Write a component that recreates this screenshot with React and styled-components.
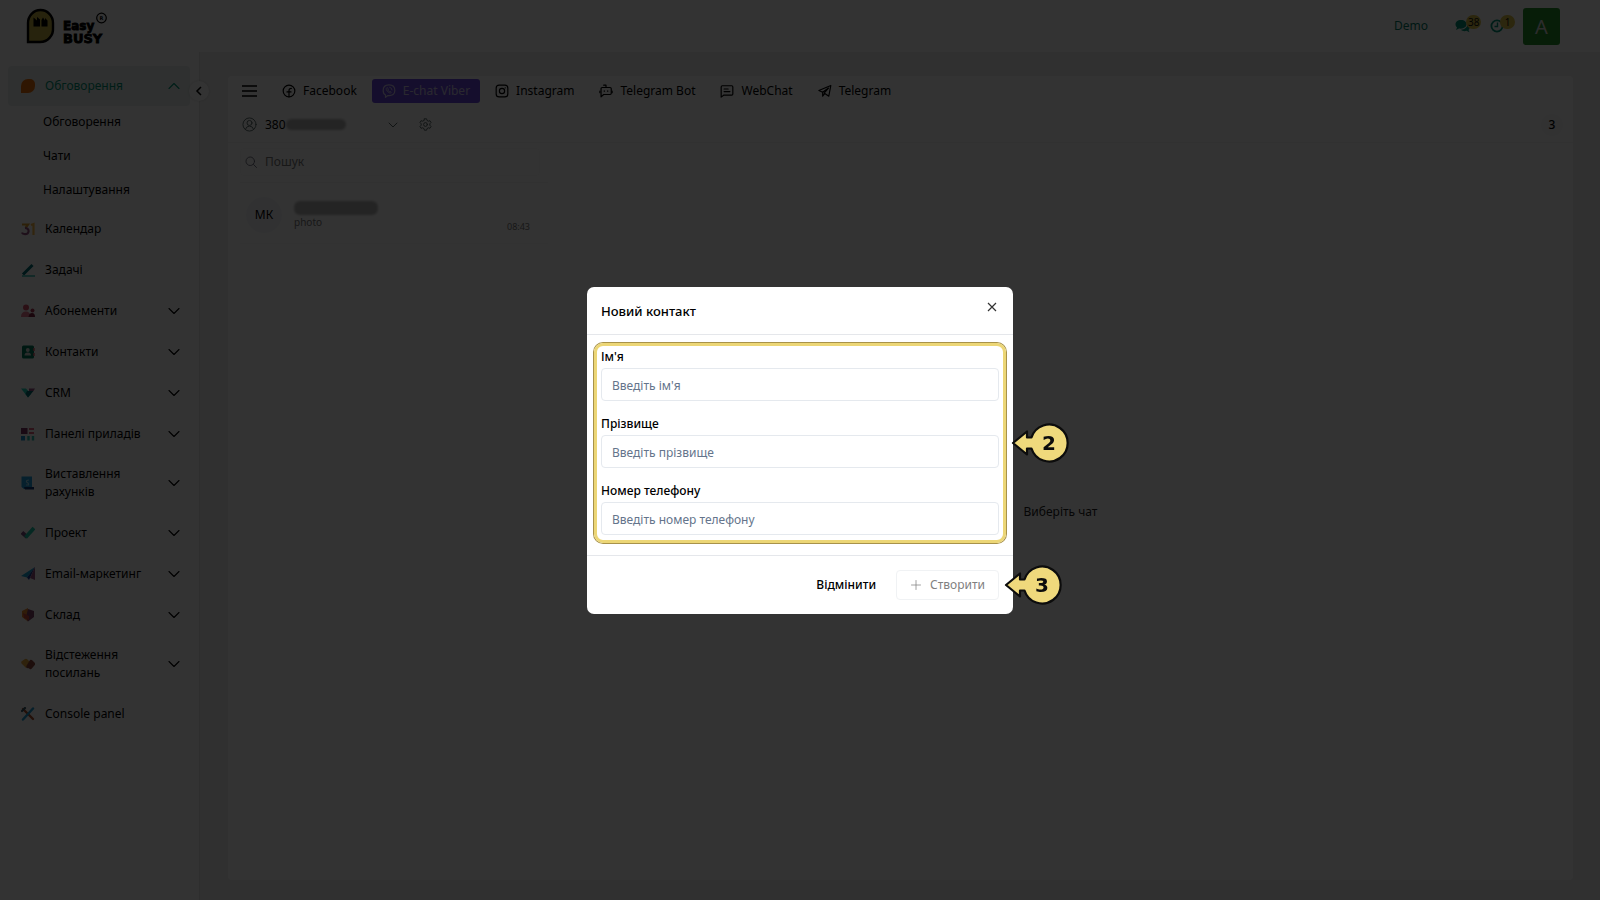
import React from "react";
import styled, { createGlobalStyle, css } from "styled-components";

const GlobalStyle = createGlobalStyle`
  *, *::before, *::after { box-sizing: border-box; }
  body {
    margin: 0;
    background: #f0f0f0;
    color: #000;
    font-family: "Noto Sans", "Open Sans", sans-serif;
    font-size: 12px;
    line-height: 18px;
  }
  button, input, select { font: inherit; color: inherit; }
  button { border: 0; background: none; padding: 0; cursor: pointer; }
  a { color: inherit; text-decoration: none; }
`;

const Page = styled.div`
  display: flex;
  flex-direction: column;
  min-height: 100vh;
`;

/* ---------- header ---------- */

const Header = styled.header`
  display: flex;
  align-items: center;
  justify-content: space-between;
  height: 52px;
  padding: 0 40px 0 26px;
  background: #fff;
`;

const HeaderTools = styled.div`
  display: flex;
  align-items: center;
`;

const Company = styled.a`
  margin-right: 27px;
  color: #007a64;
`;

const ToolButton = styled.button`
  position: relative;
  display: flex;
  width: 16px;
  height: 16px;
  margin-right: 18px;
  color: #009377;
  &:last-of-type { margin-right: 16px; }
`;

const ToolBadge = styled.span`
  position: absolute;
  left: 11px;
  top: -3px;
  min-width: 15px;
  padding: 0 2px;
  border-radius: 8px;
  background: #dcc146;
  color: #111;
  font-size: 10px;
  line-height: 14px;
  text-align: center;
`;

const UserAvatar = styled.button`
  width: 37px;
  height: 37px;
  border-radius: 3px;
  background: #26902a;
  color: #ddd;
  font-size: 20px;
  line-height: 37px;
`;

/* ---------- sidebar ---------- */

const Columns = styled.div`
  display: flex;
  flex: 1;
`;

const Sidebar = styled.nav`
  position: relative;
  flex: 0 0 200px;
  padding: 14px 9px 14px 8px;
  border-right: 1px solid #e6e6e6;
  background: #fff;
`;

const CollapseButton = styled.button`
  position: absolute;
  right: -10px;
  top: 29px;
  display: grid;
  place-items: center;
  width: 20px;
  height: 20px;
  border-radius: 50%;
  background: #fff;
  box-shadow: 0 0 3px rgba(0, 0, 0, 0.15);
`;

const MenuItem = styled.a`
  display: flex;
  align-items: center;
  gap: 10px;
  min-height: 40px;
  margin-bottom: 1px;
  padding: 10px 10px 11px 13px;
  border-radius: 4px;
  ${(p) =>
    p.$active &&
    css`
      background: #e9f1ef;
      color: #009375;
    `}
`;

const MenuLabel = styled.span`
  flex: 1;
`;

const SubMenu = styled.div`
  display: flex;
  flex-direction: column;
  margin-top: -2px;
  padding-bottom: 2px;
`;

const SubItem = styled.a`
  padding: 8px 8px 8px 35px;
`;

/* ---------- chat panel ---------- */

const Main = styled.main`
  display: flex;
  flex: 1;
  min-width: 0;
  padding: 24px 27px 20px 28px;
`;

const Panel = styled.section`
  display: flex;
  flex: 1;
  flex-direction: column;
  border-radius: 4px;
  background: #fff;
`;

const ChannelBar = styled.div`
  display: flex;
  align-items: center;
  gap: 5px;
  padding: 3px 14px 0;
`;

const BurgerButton = styled.button`
  display: flex;
  width: 25px;
`;

const Channel = styled.button`
  display: flex;
  align-items: center;
  gap: 7px;
  height: 24px;
  padding: 0 10px;
  border-radius: 3px;
  white-space: nowrap;
  ${(p) =>
    p.$active &&
    css`
      background: #6a48e0;
      color: #d0c8ec;
    `}
`;

const AccountBar = styled.div`
  display: flex;
  align-items: center;
  gap: 8px;
  height: 40px;
  padding: 4px 10px 0 14px;
  border-bottom: 1px solid #f2f2f2;
`;

const AccountButton = styled.button`
  display: flex;
  align-items: center;
  width: 157px;
  gap: 8px;
`;

const Account = styled.span`
  display: flex;
  flex: 1;
  align-items: center;
`;

const Smudge = styled.span`
  width: ${(p) => p.$width}px;
  height: ${(p) => p.$height}px;
  border-radius: 6px;
  background: #b4b4b4;
  filter: blur(1px);
`;

const IconButton = styled.button`
  display: flex;
  margin-left: 12px;
  color: #566;
`;

const CountBadge = styled.span`
  width: 22px;
  height: 22px;
  margin-left: auto;
  border-radius: 50%;
  background: #f7f7fb;
  font-weight: 500;
  line-height: 22px;
  text-align: center;
`;

const Workspace = styled.div`
  display: flex;
  flex: 1;
`;

const ChatList = styled.div`
  flex: 0 0 320px;
  padding: 5px 0 0 12px;
`;

const SearchBox = styled.label`
  display: flex;
  align-items: center;
  gap: 8px;
  height: 28px;
  margin: 0 8px 6px 0;
  padding: 0 4px;
  border: 1px solid #fafafa;
  border-radius: 4px;
  color: #667;
`;

const SearchInput = styled.input`
  flex: 1;
  min-width: 0;
  padding: 0;
  border: 0;
  outline: 0;
  background: none;
  &::placeholder { color: #777; opacity: 1; }
`;

const ChatRow = styled.button`
  display: flex;
  align-items: center;
  width: 100%;
  height: 62px;
  gap: 12px;
  padding: 4px 18px 0 6px;
  border-top: 1px solid #f2f2f2;
  border-bottom: 1px solid #f8f8f8;
  text-align: left;
`;

const ChatAvatar = styled.span`
  width: 36px;
  height: 36px;
  border-radius: 50%;
  background: #f5f6fb;
  line-height: 36px;
  text-align: center;
`;

const ChatText = styled.span`
  display: flex;
  flex: 1;
  flex-direction: column;
  color: #777;
  font-size: 10px;
  line-height: 14px;
`;

const ChatTime = styled.time`
  align-self: flex-end;
  padding-bottom: 7px;
  color: #777;
  font-size: 9px;
`;

const EmptyChat = styled.div`
  display: grid;
  flex: 1;
  place-items: center;
  color: #222;
`;

/* ---------- dialog ---------- */

const Backdrop = styled.div`
  position: fixed;
  inset: 0;
  display: flex;
  align-items: center;
  justify-content: center;
  background: rgba(0, 0, 0, 0.8);
`;

const Dialog = styled.form`
  width: 426px;
  border-radius: 7px;
  background: #fff;
`;

const DialogHeader = styled.div`
  display: flex;
  align-items: flex-start;
  justify-content: space-between;
  height: 48px;
  padding: 14px 14px 0;
  border-bottom: 1px solid #e5e7eb;
`;

const DialogTitle = styled.h2`
  margin: 0;
  font-size: 13px;
  font-weight: 500;
  line-height: 20px;
`;

const CloseButton = styled.button`
  display: flex;
  color: #333;
`;

const Fields = styled.div`
  position: relative;
  display: flex;
  flex-direction: column;
  gap: 13px;
  margin: 8px 7px 12px;
  padding: 1px 4px 5px;
  border: 3px solid #ecd676;
  border-radius: 9px;
  box-shadow: 0 0 0 1px #a8924a;
`;

const Field = styled.label`
  display: flex;
  flex-direction: column;
  gap: 1px;
  font-weight: 500;
  line-height: 20px;
`;

const TextInput = styled.input`
  width: 100%;
  height: 33px;
  padding: 2px 10px 0;
  border: 1px solid #e5e9ee;
  border-radius: 4px;
  outline: 0;
  background: #fff;
  font-weight: 400;
  &::placeholder { color: #64748b; opacity: 1; }
`;

const DialogFooter = styled.div`
  display: flex;
  align-items: center;
  justify-content: flex-end;
  gap: 20px;
  height: 59px;
  padding: 0 14px;
  border-top: 1px solid #e5e7eb;
`;

const CancelButton = styled.button`
  font-weight: 500;
`;

const CreateWrap = styled.div`
  position: relative;
`;

const CreateButton = styled.button`
  display: flex;
  align-items: center;
  gap: 8px;
  height: 30px;
  padding: 0 13px;
  border: 1px solid #f0f2f4;
  border-radius: 4px;
  color: #808080;
`;

const CalloutBox = styled.span`
  position: absolute;
  left: calc(100% + ${(p) => p.$gap}px);
  top: 50%;
  display: flex;
  transform: translateY(-50%);
`;

/* ---------- drawings ---------- */

function Callout({ number, gap }) {
  return (
    <CalloutBox $gap={gap}>
      <svg width="60" height="42" viewBox="0 0 60 42">
        <path
          d="M3 21 L17 9.500 V15.500 H21.500 A18.500 18.500 0 1 1 21.500 26.500 H17 V32.500 Z"
          fill="#efd97c"
          stroke="#0c0c0c"
          strokeWidth="2.200"
          strokeLinejoin="round"
        />
        <text x="39" y="28" textAnchor="middle" fontFamily="DejaVu Sans" fontWeight="700" fontSize="20" fill="#0c0c0c">
          {number}
        </text>
      </svg>
    </CalloutBox>
  );
}

function Logo() {
  return (
    <svg width="84" height="44" viewBox="0 -4 84 44" role="img" aria-label="Easy Busy">
      <path d="M2 34 V15 A12.500 13 0 0 1 27 15 V20 A13 13 0 0 1 14 34 Z" fill="#c2ae40" stroke="#000" strokeWidth="2.400" />
      <path d="M7.500 9.500 l3.500 3 v-3.500 l3 2.500 v7 h-6.500 z M15.500 12 l1.500 -2.500 2 3 v-2.500 l2.500 2.500 v6 h-6 z" fill="#000" />
      <g fontFamily="DejaVu Sans" fontWeight="700" fill="#000" stroke="#000" strokeWidth="0.800">
        <text x="37" y="22" fontSize="12">Easy</text>
        <text x="37" y="35" fontSize="13">BUSY</text>
      </g>
      <circle cx="75.500" cy="10" r="4.800" fill="none" stroke="#000" strokeWidth="1.200" />
      <text x="75.500" y="12" fontFamily="DejaVu Sans" fontWeight="700" fontSize="5" textAnchor="middle">R</text>
    </svg>
  );
}

const Line = ({ size = 14, width = 2, children, ...rest }) => (
  <svg width={size} height={size} viewBox="0 0 24 24" fill="none" stroke="currentColor" strokeWidth={width} strokeLinecap="round" strokeLinejoin="round" aria-hidden="true" {...rest}>
    {children}
  </svg>
);

const Chevron = ({ up }) => (
  <svg width="12" height="12" viewBox="0 0 12 12" fill="none" stroke="currentColor" strokeWidth="1.100" strokeLinecap="round" strokeLinejoin="round" aria-hidden="true">
    <path d={up ? "M1 8.500 L6 3.500 L11 8.500" : "M1 3.500 L6 8.500 L11 3.500"} />
  </svg>
);

const channelIcons = {
  facebook: (
    <Line>
      <circle cx="12" cy="12" r="10" />
      <path d="M12 22 V11 Q12 7.500 16 7.500 M8.500 13.500 H15.500" />
    </Line>
  ),
  viber: (
    <Line>
      <path d="M12 1.500 C5 1.500 2 4.500 2 11 C2 15 3.200 17.500 6 18.800 V23 L10 19.800 C18 20.500 22 17.500 22 11 C22 4.500 19 1.500 12 1.500 Z" />
      <path d="M8 6.500 C6 8 7.500 11 9.500 13 C11.500 15 14.500 16.500 16 14.500 L13.800 12.500 L12.500 13.200 C11 12.500 10.300 11.500 10 10.300 L10.800 9 Z M13 5.500 Q17 6 17.200 10.200" strokeWidth="1.600" />
    </Line>
  ),
  instagram: (
    <Line>
      <rect x="2" y="2" width="20" height="20" rx="5" />
      <circle cx="12" cy="12" r="4.500" />
      <path d="M17.500 6.500 h.01" />
    </Line>
  ),
  bot: (
    <Line>
      <path d="M12 6 V2 H8 M1.500 12 v3 M22.500 12 v3 M9 11.500 v1 M15 11.500 v1" />
      <path d="M21 16 a2 2 0 0 1 -2 2 H8 L3.500 22 V8 a2 2 0 0 1 2 -2 h13.500 a2 2 0 0 1 2 2 Z" />
    </Line>
  ),
  web: (
    <Line>
      <path d="M22 17 a2 2 0 0 1 -2 2 H6.800 L2 22.500 V5 a2 2 0 0 1 2 -2 h16 a2 2 0 0 1 2 2 Z M7 8.500 h7 M7 13 h10" />
    </Line>
  ),
  telegram: (
    <Line>
      <path d="M22 2.500 L1.500 11 L8 14 L18 7 L10.500 15.500 L18.500 21 Z M8 14 V21 L11.500 16.500" />
    </Line>
  ),
};

const menuIcons = {
  discuss: <path d="M0 14 V7 A7 7 0 0 1 7 0 H9 A5 5 0 0 1 14 5 V7 A7 7 0 0 1 7 14 Z" fill="#e8700a" />,
  calendar: (
    <g fill="none" strokeWidth="2.200">
      <path d="M1 2.500 H7 L4.500 6" stroke="#e0a030" />
      <path d="M4 6 C9 6 8.500 12.500 4 12.200 Q1.500 12 1 10.500" stroke="#985184" />
      <path d="M10 3 L12.500 2 V13" stroke="#fbb945" />
    </g>
  ),
  tasks: (
    <g fill="none">
      <path d="M2 11.500 L11.500 2" stroke="#016e76" strokeWidth="3" />
      <path d="M1 13 H14" stroke="#2ebcae" strokeWidth="1.500" />
    </g>
  ),
  subs: (
    <g>
      <circle cx="5" cy="3.500" r="3" fill="#d8506c" />
      <path d="M0 13 Q0 7.500 5 7.500 Q9 7.500 10 13 Z" fill="#e87890" />
      <circle cx="11.500" cy="6.500" r="2" fill="#b03a56" />
      <path d="M7.500 13 Q8 9 11 9 Q14 9 14 13 Z" fill="#7c1f3c" />
    </g>
  ),
  contacts: (
    <g>
      <rect x="1" y="0.500" width="12" height="13" rx="1.500" fill="#017a5c" />
      <path d="M13 3 v3 M13 8 v3" stroke="#e0606c" strokeWidth="1.500" />
      <circle cx="6.800" cy="5" r="1.900" fill="#ddd" />
      <path d="M3.500 10.500 Q3.500 7.500 6.800 7.500 Q10 7.500 10 10.500 Z" fill="#ddd" />
    </g>
  ),
  crm: (
    <g>
      <path d="M0 2.500 H5 L10 8 L7 11.500 Z" fill="#1ad3bb" />
      <path d="M12.500 5 H6 L4.500 8 L7 11.500 Z" fill="#046b72" />
      <path d="M8 2.500 H14 L12.500 5 H8 Z" fill="#985184" />
    </g>
  ),
  boards: (
    <g>
      <rect x="0" y="1" width="6.500" height="6" fill="#7c3265" />
      <path d="M8 2 h5 M8 6 h5" stroke="#e0607c" strokeWidth="2" />
      <rect x="0" y="9" width="4" height="4.500" fill="#1a8fd0" />
      <path d="M7.500 9 v4.500 M12 9 v4.500" stroke="#2ebcae" strokeWidth="2.400" />
    </g>
  ),
  invoice: (
    <g>
      <path d="M0.500 0.500 H11 V13 H3 L0.500 11 Z" fill="#1ea0e0" />
      <path d="M3 11 H13 V13.500 H4 Z" fill="#123a78" />
      <path d="M8 4 Q5 4 5.500 6 Q8 7 7.500 9 H5" fill="none" stroke="#a0def8" strokeWidth="1.200" />
    </g>
  ),
  project: (
    <g fill="none" strokeWidth="3.800">
      <path d="M1 6.500 L6 11" stroke="#7a4a80" />
      <path d="M4.500 11.500 L13 2" stroke="#1ac8a8" />
    </g>
  ),
  email: (
    <g>
      <path d="M14 0 L0 9 L6 10.500 Z" fill="#1aa6d8" />
      <path d="M14 0 L6 10.500 L8 13 Z" fill="#1b3f9b" />
      <path d="M14 0 L9 11 L14 13 Z" fill="#985184" />
    </g>
  ),
  stock: (
    <g>
      <path d="M7 0 L1 3 V9 L7 13.500 Z" fill="#f08a30" />
      <path d="M7 1 L13 3 V9 L7 13.500 L5 9 Z" fill="#80406c" />
      <path d="M2 5 L8 8 V12 L3 10 Z" fill="#d04a3c" />
    </g>
  ),
  links: (
    <g fill="none" strokeWidth="3.400" strokeLinejoin="round" strokeLinecap="round">
      <path d="M2 5.500 L5.500 9 L8 6.500 L5 3.500 Z" stroke="#e8a83c" />
      <path d="M7 9.500 L10 4.500 L12.500 7 L9.500 10.500" stroke="#90483c" />
    </g>
  ),
  consolePanel: (
    <g fill="none" strokeLinecap="round">
      <path d="M2 2 L12 12" stroke="#b0502c" strokeWidth="2.400" />
      <path d="M2 12.500 L12 1.500" stroke="#1e9ad0" strokeWidth="2.400" />
      <path d="M1 4 L4 1" stroke="#335566" strokeWidth="2.200" />
    </g>
  ),
};

const MenuIcon = ({ name }) => (
  <svg width="14" height="14" viewBox="0 0 14 14" aria-hidden="true">
    {menuIcons[name]}
  </svg>
);

/* ---------- data ---------- */

const menu = [
  { icon: "calendar", label: "Календар" },
  { icon: "tasks", label: "Задачі" },
  { icon: "subs", label: "Абонементи", nested: true },
  { icon: "contacts", label: "Контакти", nested: true },
  { icon: "crm", label: "CRM", nested: true },
  { icon: "boards", label: "Панелі приладів", nested: true },
  { icon: "invoice", label: "Виставлення рахунків", nested: true },
  { icon: "project", label: "Проект", nested: true },
  { icon: "email", label: "Email-маркетинг", nested: true },
  { icon: "stock", label: "Склад", nested: true },
  { icon: "links", label: "Відстеження посилань", nested: true },
  { icon: "consolePanel", label: "Console panel" },
];

const channels = [
  { icon: "facebook", label: "Facebook" },
  { icon: "viber", label: "E-chat Viber", active: true },
  { icon: "instagram", label: "Instagram" },
  { icon: "bot", label: "Telegram Bot" },
  { icon: "web", label: "WebChat" },
  { icon: "telegram", label: "Telegram" },
];

const fields = [
  { name: "first", label: "Ім'я", hint: "Введіть ім'я" },
  { name: "last", label: "Прізвище", hint: "Введіть прізвище" },
  { name: "phone", label: "Номер телефону", hint: "Введіть номер телефону" },
];

export default function App() {
  return (
    <>
      <GlobalStyle />
      <Page>
        <Header>
          <Logo />
          <HeaderTools>
            <Company href="#">Demo</Company>
            <ToolButton type="button" aria-label="Повідомлення">
              <svg width="16" height="16" viewBox="0 0 16 16" fill="currentColor">
                <path d="M6 2 C2.500 2 0.500 4 0.500 6.300 C0.500 7.500 1 8.600 2 9.400 L1 12 L4 10.500 C8.500 11.300 11.500 9 11.500 6.300 C11.500 4 9.500 2 6 2 Z M12.500 6 C12.500 9.500 9.500 11.600 6 11.700 C7.500 13.200 9.500 13.500 11.500 12.800 L14.500 14.300 L13.500 12 C15.500 10.300 15 7 12.500 6 Z" />
              </svg>
              <ToolBadge>38</ToolBadge>
            </ToolButton>
            <ToolButton type="button" aria-label="Активності">
              <svg width="16" height="16" viewBox="0 0 16 16" fill="none" stroke="currentColor" strokeWidth="1.800">
                <circle cx="8" cy="8" r="5.600" />
                <path d="M8.500 4.500 V8.500 H5.500" strokeWidth="1.400" />
              </svg>
              <ToolBadge>1</ToolBadge>
            </ToolButton>
            <UserAvatar type="button">A</UserAvatar>
          </HeaderTools>
        </Header>
        <Columns>
          <Sidebar>
            <MenuItem href="#" $active>
              <MenuIcon name="discuss" />
              <MenuLabel>Обговорення</MenuLabel>
              <Chevron up />
            </MenuItem>
            <SubMenu>
              <SubItem href="#">Обговорення</SubItem>
              <SubItem href="#">Чати</SubItem>
              <SubItem href="#">Налаштування</SubItem>
            </SubMenu>
            {menu.map((m) => (
              <MenuItem href="#" key={m.label}>
                <MenuIcon name={m.icon} />
                <MenuLabel>{m.label}</MenuLabel>
                {m.nested && <Chevron />}
              </MenuItem>
            ))}
            <CollapseButton type="button" aria-label="Згорнути меню">
              <svg width="8" height="10" viewBox="0 0 8 10" fill="none" stroke="currentColor" strokeWidth="1.500">
                <path d="M6 1 L2 5 L6 9" />
              </svg>
            </CollapseButton>
          </Sidebar>
          <Main>
            <Panel>
              <ChannelBar>
                <BurgerButton type="button" aria-label="Меню">
                  <svg width="16" height="14" viewBox="0 0 16 14" stroke="currentColor" strokeWidth="1.500">
                    <path d="M0 2 H15 M0 7 H15 M0 12 H15" />
                  </svg>
                </BurgerButton>
                {channels.map((c) => (
                  <Channel type="button" key={c.label} $active={c.active}>
                    {channelIcons[c.icon]}
                    {c.label}
                  </Channel>
                ))}
              </ChannelBar>
              <AccountBar>
                <AccountButton type="button">
                  <Line size={15} width={1.5} color="#566">
                    <circle cx="12" cy="12" r="10.500" />
                    <circle cx="12" cy="9.500" r="4" />
                    <path d="M5.500 19.500 Q7 14.500 12 14.500 Q17 14.500 18.500 19.500" />
                  </Line>
                  <Account>
                    380
                    <Smudge $width={60} $height={11} />
                  </Account>
                  <Line size={12} width={2} color="#566">
                    <path d="M4 8 L12 16 L20 8" />
                  </Line>
                </AccountButton>
                <IconButton type="button" aria-label="Налаштування каналу">
                  <Line size={13} width={1.8}>
                    <path d="M10 1.500 h4 l.8 3 2.400 1.400 3 -.9 2 3.500 -2.200 2.200 v2.600 l2.200 2.200 -2 3.500 -3 -.9 -2.400 1.400 -.8 3 h-4 l-.8 -3 -2.400 -1.400 -3 .9 -2 -3.500 2.200 -2.200 v-2.600 l-2.200 -2.200 2 -3.500 3 .9 2.400 -1.400 z" />
                    <circle cx="12" cy="12" r="3.500" />
                  </Line>
                </IconButton>
                <CountBadge>3</CountBadge>
              </AccountBar>
              <Workspace>
                <ChatList>
                  <SearchBox>
                    <Line size={12} width={1.8}>
                      <circle cx="10.500" cy="10.500" r="8.500" />
                      <path d="M17 17 L23 23" />
                    </Line>
                    <SearchInput type="search" placeholder="Пошук" aria-label="Пошук" />
                  </SearchBox>
                  <ChatRow type="button">
                    <ChatAvatar>МК</ChatAvatar>
                    <ChatText>
                      <Smudge $width={84} $height={14} />
                      photo
                    </ChatText>
                    <ChatTime>08:43</ChatTime>
                  </ChatRow>
                </ChatList>
                <EmptyChat>Виберіть чат</EmptyChat>
              </Workspace>
            </Panel>
          </Main>
        </Columns>
      </Page>
      <Backdrop>
        <Dialog role="dialog" aria-labelledby="dialog-title" onSubmit={(e) => e.preventDefault()}>
          <DialogHeader>
            <DialogTitle id="dialog-title">Новий контакт</DialogTitle>
            <CloseButton type="button" aria-label="Закрити">
              <svg width="13" height="12" viewBox="0 0 13 12" stroke="currentColor" strokeWidth="1.200">
                <path d="M2 2 L10 10 M10 2 L2 10" />
              </svg>
            </CloseButton>
          </DialogHeader>
          <Fields>
            {fields.map((f) => (
              <Field key={f.name}>
                {f.label}
                <TextInput name={f.name} placeholder={f.hint} />
              </Field>
            ))}
            <Callout number="2" gap={7} />
          </Fields>
          <DialogFooter>
            <CancelButton type="button">Відмінити</CancelButton>
            <CreateWrap>
              <CreateButton type="submit">
                <Line size={12} width={1.5}>
                  <path d="M12 3 V21 M3 12 H21" />
                </Line>
                Створити
              </CreateButton>
              <Callout number="3" gap={4} />
            </CreateWrap>
          </DialogFooter>
        </Dialog>
      </Backdrop>
    </>
  );
}
